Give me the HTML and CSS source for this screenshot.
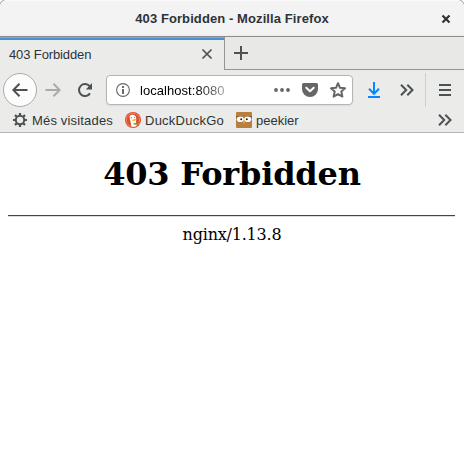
FILE: index.html
```html
<!DOCTYPE html>
<html lang="ca">
<head>
<meta charset="utf-8">
<title>403 Forbidden</title>
<link rel="stylesheet" href="styles.css">
</head>
<body>
<div class="window">
  <header class="titlebar">
    <span class="window-title">403 Forbidden - Mozilla Firefox</span>
    <svg class="window-close" width="10" height="10" viewBox="0 0 10 10"><path d="M1.500 1.500l7 7M8.500 1.500l-7 7" stroke="#2e3436" stroke-width="2.200" fill="none"/></svg>
  </header>
  <div class="tabs">
    <div class="tab">
      <span>403 Forbidden</span>
      <svg width="12" height="12" viewBox="0 0 12 12"><path d="M1.500 1.500l9 9M10.500 1.500l-9 9" stroke="#4c5254" stroke-width="1.700" fill="none"/></svg>
    </div>
    <div class="tab-rest">
      <svg width="16" height="16" viewBox="0 0 16 16"><path d="M8 1v14M1 8h14" stroke="#4c5254" stroke-width="2" fill="none"/></svg>
    </div>
  </div>
  <nav class="toolbar">
    <div class="back"><svg width="16" height="16" viewBox="0 0 16 16"><path d="M15.500 8H1.500M7.500 1.800L1.300 8l6.200 6.200" stroke="#4c5254" stroke-width="2" fill="none"/></svg></div>
    <svg class="forward" width="16" height="16" viewBox="0 0 16 16"><path d="M.5 8h14M8.500 1.800L14.700 8l-6.200 6.200" stroke="#a9abab" stroke-width="2" fill="none"/></svg>
    <svg class="reload" width="16" height="16" viewBox="0 0 16 16"><path d="M12.600 4.200A6 6 0 1 0 13 11.400" stroke="#4c5254" stroke-width="2" fill="none"/><path d="M15 1v6.500H8.800z" fill="#4c5254"/></svg>
    <div class="urlbar">
      <svg class="info" width="14" height="14" viewBox="0 0 14 14"><circle cx="7" cy="7" r="6.400" fill="none" stroke="#666" stroke-width="1.100"/><path d="M7 6v5M7 3v2" stroke="#666" stroke-width="1.900"/></svg>
      <span class="url">localhost:8080</span>
      <svg class="dots" width="16" height="4" viewBox="0 0 16 4"><g fill="#666"><circle cx="2" cy="2" r="1.900"/><circle cx="8" cy="2" r="1.900"/><circle cx="14" cy="2" r="1.900"/></g></svg>
      <svg class="pocket" width="16" height="14" viewBox="0 0 16 14"><path d="M1.500 0h13Q16 0 16 1.500V6A8 8 0 0 1 0 6V1.500Q0 0 1.500 0z" fill="#666"/><path d="M4.300 4.800L8 8.300l3.700-3.500" fill="none" stroke="#fff" stroke-width="2" stroke-linecap="round" stroke-linejoin="round"/></svg>
      <svg class="star" width="16" height="16" viewBox="0 0 16 16"><path d="M8 1.200l2 4.600 5 .5-3.700 3.300 1.100 5L8 12.100l-4.400 2.500 1.100-5L1 6.300l5-.5z" fill="none" stroke="#666" stroke-width="2" stroke-linejoin="round"/></svg>
    </div>
    <svg class="download" width="14" height="16" viewBox="0 0 14 16"><path d="M7 0v11.500M2 6.800l5 5 5-5M1 15h12" stroke="#0a84ff" stroke-width="2" fill="none"/></svg>
    <svg class="more" width="14" height="12" viewBox="0 0 14 12"><path d="M1 .8L6.200 6 1 11.200M7.300.8L12.500 6l-5.200 5.200" stroke="#4c5254" stroke-width="2" fill="none"/></svg>
    <div class="menu"><svg width="12" height="12" viewBox="0 0 12 12"><path d="M0 1h12M0 6h12M0 11h12" stroke="#4c5254" stroke-width="2"/></svg></div>
  </nav>
  <div class="bookmarks">
    <svg class="gear" width="16" height="16" viewBox="0 0 16 16"><g stroke="#4c5254" fill="none"><circle cx="8" cy="8" r="4.200" stroke-width="2"/><path d="M8 1v3M8 12v3M1 8h3M12 8h3M3 3l2 2M11 11l2 2M13 3l-2 2M3 13l2-2" stroke-width="2.200"/></g></svg>
    <span class="label-visited">Més visitades</span>
    <svg class="favicon" width="16" height="16" viewBox="0 0 16 16"><circle cx="8" cy="8" r="8" fill="#de4f2d"/><circle cx="8" cy="8" r="6.700" fill="none" stroke="#f4a28c" stroke-width=".6"/><path d="M4.500 4.500Q5 2.300 8 2.700q3.500.5 3.200 4.800l-.2 3 .5 3.500q-2.500 1.200-5.100.4z" fill="#fff"/><circle cx="6.300" cy="5.800" r=".6" fill="#2d4f8e"/><circle cx="9.500" cy="5.600" r=".5" fill="#2d4f8e"/><path d="M7 7.800q2-1 4.500-.6-1 1.900-4 1.900z" fill="#fdb90a"/><path d="M8.300 11.300l3.200-.8v2.500l-3-.5z" fill="#65bc46"/></svg>
    <span class="label-duck">DuckDuckGo</span>
    <svg class="favicon" width="16" height="16" viewBox="0 0 16 16"><rect width="16" height="16" rx="1" fill="#b8803f"/><path d="M0 4h5l3 2 3-2h5v1.500H0z" fill="#8e5b2c"/><ellipse cx="4.300" cy="7.300" rx="3.500" ry="2.800" fill="#fff"/><ellipse cx="11.700" cy="7.300" rx="3.500" ry="2.800" fill="#fff"/><circle cx="5.200" cy="7.300" r="1" fill="#222"/><circle cx="10.800" cy="7.300" r="1" fill="#222"/><path d="M6.500 9h3L8 12.500z" fill="#ff9b16"/></svg>
    <span class="label-peekier">peekier</span>
    <svg class="overflow" width="14" height="12" viewBox="0 0 14 12"><path d="M1 .8L6.200 6 1 11.200M7.300.8L12.500 6l-5.200 5.200" stroke="#4c5254" stroke-width="2" fill="none"/></svg>
  </div>
  <main class="page">
    <h1>403 Forbidden</h1>
    <hr>
    <p>nginx/1.13.8</p>
  </main>
</div>
</body>
</html>
```
FILE: styles.css
```css
* { box-sizing: border-box; }
body {
  margin: 0;
  background: #fff;
  color: #2e3436;
  font: 13px/16px "Liberation Sans", Arial, sans-serif;
  overflow: hidden;
}
svg { display: block; flex: none; }
span { white-space: nowrap; }
.window {
  width: 464px;
  height: 476px;
  display: flex;
  flex-direction: column;
  background: #fff;
}
.titlebar {
  height: 37px;
  flex: none;
  display: grid;
  grid-template-columns: 35px 1fr 35px;
  align-items: center;
  background: linear-gradient(#f3f3f3 33px, #e8e8e7 36px);
  border-top: 1px solid #fafafa;
  border-bottom: 1px solid #8b8e89;
  border-radius: 7px 7px 0 0;
  box-shadow: 0 0 0 1px #aaa;
}
.window-title { grid-column: 2; text-align: center; font-weight: bold; letter-spacing: .09px; }
.window-close { margin-left: 12px; }
.tabs { height: 33px; flex: none; display: flex; background: #e8e8e6; }
.tab {
  width: 225px;
  display: flex;
  align-items: center;
  justify-content: space-between;
  padding: 0 11px 0 9px;
  background: linear-gradient(#a3a49f 1px, #4a90d9 1px, #4a90d9 3px, #ebebe9 3px);
  border-right: 1px solid #929591;
}
.tab span { padding-top: 2px; letter-spacing: -.12px; }
.tab-rest { flex: 1; padding: 8px; border-bottom: 1px solid #929591; }
.toolbar {
  height: 40px;
  flex: none;
  display: flex;
  align-items: center;
  background: #ebebe9;
  padding-left: 3px;
}
.back {
  width: 34px;
  height: 34px;
  display: grid;
  place-items: center;
  border: 1px solid #aaa;
  border-radius: 50%;
  background: #fcfcfc;
}
.forward { margin-left: 8px; }
.reload { margin-left: 16px; }
.urlbar {
  width: 247px;
  height: 30px;
  margin-left: 13px;
  display: flex;
  align-items: center;
  padding-left: 9px;
  background: #fff;
  border: 1px solid #b5b5b3;
  border-radius: 4px;
  box-shadow: 0 1px 2px #0001;
}
.url {
  width: 86px;
  margin-left: 10px;
  padding-top: 1px;
  overflow: hidden;
  letter-spacing: .05px;
  color: transparent;
  background: linear-gradient(90deg, #000 56px, #aaa 86px);
  background-clip: text;
}
.dots { margin-left: 48px; }
.pocket { margin-left: 12px; }
.star { margin-left: 12px; }
.download { margin-left: 14px; }
.more { margin-left: 19px; }
.menu {
  height: 34px;
  margin-left: 11px;
  padding-left: 13px;
  display: flex;
  align-items: center;
  border-left: 1px solid #cfcfcd;
}
.bookmarks {
  height: 23px;
  flex: none;
  display: flex;
  align-items: center;
  padding: 0 12px 2px;
  background: #ebebe9;
  border-bottom: 1px solid #b6b6b4;
}
.bookmarks span { padding-top: 1px; }
.label-visited { width: 81px; margin: 0 12px 0 4px; letter-spacing: .17px; }
.label-duck { width: 79px; margin: 0 12px 0 4px; letter-spacing: .25px; }
.label-peekier { margin-left: 4px; }
.overflow { margin-left: auto; }
.page {
  flex: 1;
  padding: 22px 8px 0;
  color: #000;
  text-align: center;
  font-family: "DejaVu Serif", serif;
}
h1 { margin: 0; font-size: 32px; line-height: 39px; letter-spacing: -.18px; }
hr {
  height: 2px;
  margin: 21px 1px 8px 0;
  border: 0;
  border-top: 1px solid #444;
  border-bottom: 1px solid #ddd;
}
p {
  margin: 0;
  font-size: 16px;
  line-height: 20px;
  letter-spacing: -.2px;
}
```
